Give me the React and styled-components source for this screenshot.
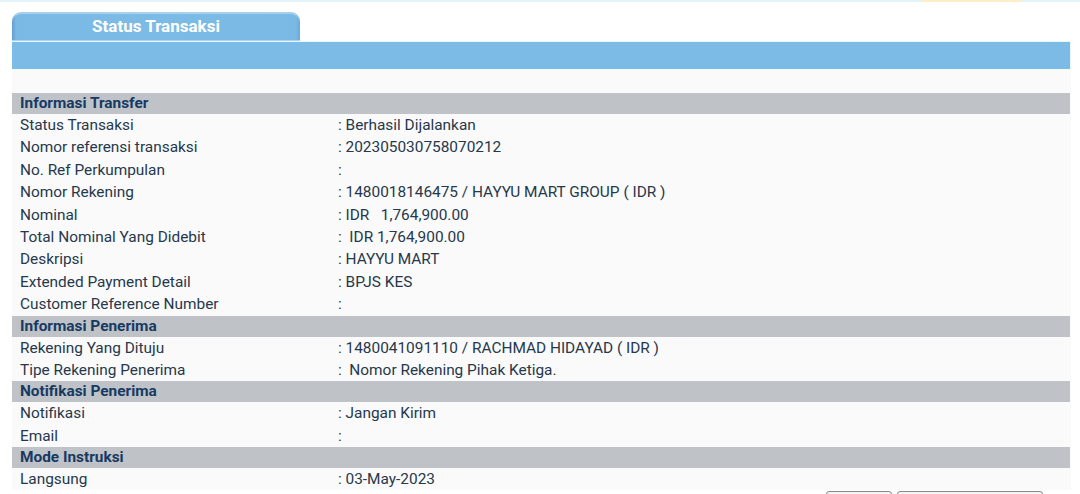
import React from "react";
import styled, { createGlobalStyle } from "styled-components";

const GlobalStyle = createGlobalStyle`
  body {
    margin: 0;
    background: #fff;
    font-family: Roboto, "Liberation Sans", sans-serif;
    overflow: hidden;
  }
`;

const sections = [
  {
    title: "Informasi Transfer",
    rows: [
      ["Status Transaksi", ": Berhasil Dijalankan"],
      ["Nomor referensi transaksi", ": 202305030758070212"],
      ["No. Ref Perkumpulan", ":"],
      ["Nomor Rekening", ": 1480018146475 / HAYYU MART GROUP ( IDR )"],
      ["Nominal", ": IDR   1,764,900.00"],
      ["Total Nominal Yang Didebit", ":  IDR 1,764,900.00"],
      ["Deskripsi", ": HAYYU MART"],
      ["Extended Payment Detail", ": BPJS KES"],
      ["Customer Reference Number", ":"],
    ],
  },
  {
    title: "Informasi Penerima",
    rows: [
      ["Rekening Yang Dituju", ": 1480041091110 / RACHMAD HIDAYAD ( IDR )"],
      ["Tipe Rekening Penerima", ":  Nomor Rekening Pihak Ketiga."],
    ],
  },
  {
    title: "Notifikasi Penerima",
    rows: [
      ["Notifikasi", ": Jangan Kirim"],
      ["Email", ":"],
    ],
  },
  {
    title: "Mode Instruksi",
    rows: [["Langsung", ": 03-May-2023"]],
  },
];

const App = () => {
  return (
    <>
      <GlobalStyle />
      <TopStrip />
      <Page>
        <Tab>Status Transaksi</Tab>
        <BlueBar />
        <Panel>
          {sections.map((s) => (
            <Section key={s.title}>
              <SectionHeader>{s.title}</SectionHeader>
              {s.rows.map(([label, value]) => (
                <Row key={label}>
                  <Label>{label}</Label>
                  <Value>{value}</Value>
                </Row>
              ))}
            </Section>
          ))}
        </Panel>
        <Buttons>
          <Button $w={66} />
          <Button $w={146} />
        </Buttons>
      </Page>
    </>
  );
};

export default App;

const TopStrip = styled.div`
  height: 2px;
  background: linear-gradient(
    to right,
    #e3f5fb 0,
    #e3f5fb 922px,
    #fdeec8 922px,
    #fdeec8 1022px,
    #e3f5fb 1022px
  );
`;

const Page = styled.div`
  padding: 10px 9px 0 12px;
`;

const Tab = styled.div`
  width: 288px;
  height: 29px;
  box-sizing: border-box;
  padding-top: 4px;
  border-radius: 9px 9px 0 0;
  background: linear-gradient(
    to right,
    #5f9ccb 0,
    #79b9e4 4px,
    #7bbbe6 50%,
    #79b9e4 calc(100% - 4px),
    #6aa8d6 100%
  );
  box-shadow: inset 0 2px 1px rgba(255, 255, 255, 0.35);
  color: #fff;
  font-weight: 700;
  font-size: 17px;
  line-height: 20px;
  text-align: center;
  border-bottom: 1px solid #a6d4f2;
`;

const BlueBar = styled.div`
  height: 28px;
  background: #7bbbe6;
  border-top: 1px solid #e8f7fd;
  border-right: 1px solid #e8f7fd;
  box-sizing: border-box;
`;

const Panel = styled.div`
  background: #fafafa;
  padding-top: 23px;
  padding-right: 1px;
  border-top: 1px solid #f0fafd;
`;

const Section = styled.div`
  display: flex;
  flex-direction: column;
`;

const SectionHeader = styled.div`
  height: 21px;
  line-height: 21px;
  background: #bfc2c7;
  padding-left: 8px;
  color: #173a63;
  font-weight: 700;
  font-size: 15.4px;
`;

const Row = styled.div`
  display: grid;
  grid-template-columns: 326px 1fr;
  height: 22.4px;
  line-height: 22px;
  font-size: 15.4px;
  color: #26384c;
`;

const Label = styled.div`
  padding-left: 8px;
`;

const Value = styled.div`
  white-space: pre;
`;

const Buttons = styled.div`
  display: flex;
  justify-content: flex-end;
  gap: 5px;
  padding: 1px 28px 0 0;
`;

const Button = styled.div`
  width: ${(p) => p.$w}px;
  height: 24px;
  box-sizing: border-box;
  border: 1px solid #8a8a8a;
  border-radius: 3px;
  background: #f4f4f4;
`;
